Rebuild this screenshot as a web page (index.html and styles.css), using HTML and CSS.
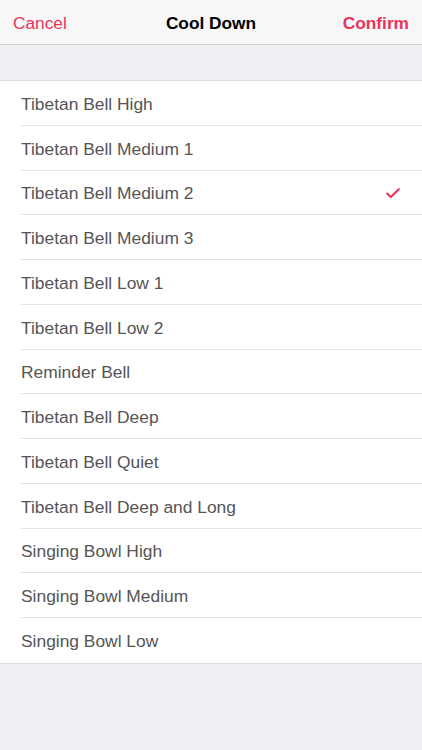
FILE: index.html
```html
<!DOCTYPE html>
<html>
<head>
<meta charset="utf-8">
<link rel="stylesheet" href="styles.css">
</head>
<body>
<div class="app">
  <header class="nav">
    <span class="nav-btn">Cancel</span>
    <span class="nav-title">Cool Down</span>
    <span class="nav-btn nav-confirm">Confirm</span>
  </header>
  <div class="spacer"></div>
  <ul class="list">
    <li class="row"><span class="label">Tibetan Bell High</span></li>
    <li class="row"><span class="label">Tibetan Bell Medium 1</span></li>
    <li class="row"><span class="label">Tibetan Bell Medium 2</span>
      <svg class="check" width="14" height="12" viewBox="0 0 14 12"><path d="M1.2 6.6 L4.8 10 L12.8 2.2" fill="none" stroke="#e8345b" stroke-width="2.1" stroke-linecap="round" stroke-linejoin="round"/></svg>
    </li>
    <li class="row"><span class="label">Tibetan Bell Medium 3</span></li>
    <li class="row"><span class="label">Tibetan Bell Low 1</span></li>
    <li class="row"><span class="label">Tibetan Bell Low 2</span></li>
    <li class="row"><span class="label">Reminder Bell</span></li>
    <li class="row"><span class="label">Tibetan Bell Deep</span></li>
    <li class="row"><span class="label">Tibetan Bell Quiet</span></li>
    <li class="row"><span class="label">Tibetan Bell Deep and Long</span></li>
    <li class="row"><span class="label">Singing Bowl High</span></li>
    <li class="row"><span class="label">Singing Bowl Medium</span></li>
    <li class="row"><span class="label">Singing Bowl Low</span></li>
  </ul>
</div>
</body>
</html>
```
FILE: styles.css
```css
* { box-sizing: border-box; }
html, body { margin: 0; padding: 0; }
body {
  background: #efeff4;
  font-family: "Liberation Sans", Arial, sans-serif;
  width: 422px;
  height: 750px;
  overflow: hidden;
}
.app { display: flex; flex-direction: column; }
.nav {
  height: 45px;
  background: #f7f7f8;
  border-bottom: 1px solid #cfcfd3;
  display: flex;
  align-items: center;
  justify-content: space-between;
  padding: 2px 13px 0 13px;
  position: relative;
}
.nav-btn {
  color: #e8345b;
  font-size: 17.3px;
}
.nav-confirm { font-weight: bold; }
.nav-title {
  position: absolute;
  left: 0; right: 0;
  top: 0; bottom: 0;
  padding-top: 2px;
  display: flex;
  align-items: center;
  justify-content: center;
  font-weight: bold;
  font-size: 17.3px;
  color: #000;
  pointer-events: none;
}
.spacer { height: 35px; }
.list {
  list-style: none;
  margin: 0;
  padding: 0 0 0 21px;
  background: #fff;
  border-top: 1px solid #dcdce0;
  border-bottom: 1px solid #dcdce0;
}
.row {
  height: 44.75px;
  display: flex;
  align-items: center;
  justify-content: space-between;
  padding: 3px 22px 0 0;
  border-bottom: 1px solid #e3e3e6;
  font-size: 17.4px;
  color: #555555;
}
.row:last-child { border-bottom: none; }
.check { display: block; margin-top: -2px; }
```
